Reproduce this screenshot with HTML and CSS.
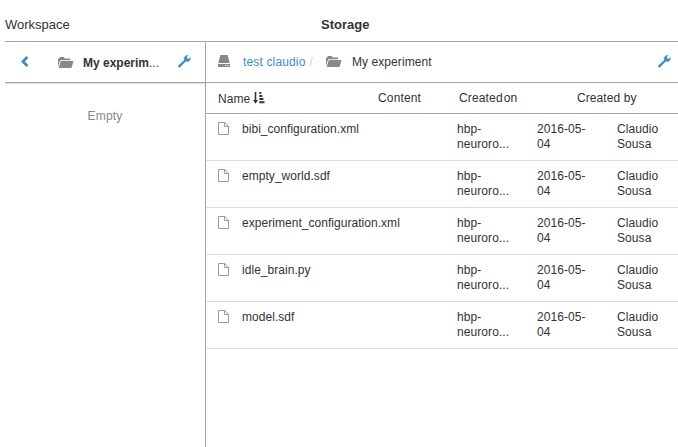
FILE: index.html
```html
<!DOCTYPE html>
<html lang="en">
<head>
<meta charset="utf-8">
<title>Storage</title>
<link rel="stylesheet" href="styles.css">
</head>
<body>
<svg class="defs" width="0" height="0">
  <symbol id="folder" viewBox="0 0 16 12"><path d="M0 10V2Q0 1.5.5 1.5H1.5V.5Q1.6 0 2.2 0H5.5Q6 0 6.2.6L6.5 1.5H11.5Q12.2 1.5 12.2 2.2V3.2H2.8Q2.2 3.2 1.9 4ZM3.3 4H15Q15.6 4 15.4 4.8L13.6 10.4Q13.4 11 12.7 11H1.2Q.7 11 .9 10.4L2.6 4.6Q2.8 4 3.3 4Z"/></symbol>
  <symbol id="wrench" viewBox="0 0 13 13"><path stroke="currentColor" stroke-width=".4" d="M10.3.2 8.8 1.6 9.1 3.7 10.8 4 12.3 2.6Q12.8 5.2 10.8 6.2 9.3 6.9 7.8 6.2L2.3 12Q1.4 12.7.7 12.1-.1 11.2.7 10.3L6.3 5.2Q5.6 2.4 7.4.9 8.7-.1 10.3.2Z"/></symbol>
  <symbol id="file" viewBox="0 0 11 13"><path fill="none" stroke="currentColor" d="M.5.5H6.8L10.5 4.2V12.5H.5ZM6.5.5V4.5H10.5"/></symbol>
</svg>
<header class="tabs"><span class="tab">Workspace</span><strong class="tab current">Storage</strong></header>
<main class="browser">
  <aside class="side">
    <div class="bar side-bar">
      <svg class="icon back" width="8" height="11" viewBox="0 0 8 11"><path fill="none" stroke="currentColor" stroke-width="2.8" d="M6.4 1.1 2 5.5 6.4 9.9"/></svg>
      <svg class="icon folder" width="16" height="12"><use href="#folder"/></svg>
      <span class="side-title"><strong>My experim</strong>...</span>
      <svg class="icon wrench" width="13" height="13"><use href="#wrench"/></svg>
    </div>
    <p class="empty">Empty</p>
  </aside>
  <section class="files">
    <nav class="bar">
      <svg class="icon disk" width="12" height="13" viewBox="0 0 12 13"><path fill-rule="evenodd" d="M2.2.7Q2.4 0 3 0H9Q9.6 0 9.8.7L11.7 8H.3ZM0 9H12V11.4Q12 12 11.4 12H.6Q0 12 0 11.4ZM7.2 10V11H8.3V10ZM9.3 10V11H10.4V10Z"/></svg>
      <a class="crumb">test claudio</a><span class="slash">/</span>
      <svg class="icon folder" width="16" height="12"><use href="#folder"/></svg>
      <span class="here">My experiment</span>
      <svg class="icon wrench" width="13" height="13"><use href="#wrench"/></svg>
    </nav>
    <div class="head">
      <span class="h-name">Name <svg class="sort" width="12" height="12" viewBox="0 0 12 12"><path d="M1.7 0H3.3V8H5L2.5 11.8 0 8H1.7ZM6.3 0H8.3V2H6.3ZM6.3 3H9.3V5H6.3ZM6.3 6H10.4V8H6.3ZM6.3 9.3H11.5V11.3H6.3Z"/></svg></span>
      <span class="h-content">Content</span><span class="h-on">Created on</span><span class="h-by">Created by</span>
    </div>
    <div class="row"><svg class="file" width="11" height="13"><use href="#file"/></svg><span class="name">bibi_configuration.xml</span><span>hbp-<br>neuroro...</span><span>2016-05-<br>04</span><span>Claudio<br>Sousa</span></div>
    <div class="row"><svg class="file" width="11" height="13"><use href="#file"/></svg><span class="name">empty_world.sdf</span><span>hbp-<br>neuroro...</span><span>2016-05-<br>04</span><span>Claudio<br>Sousa</span></div>
    <div class="row"><svg class="file" width="11" height="13"><use href="#file"/></svg><span class="name">experiment_configuration.xml</span><span>hbp-<br>neuroro...</span><span>2016-05-<br>04</span><span>Claudio<br>Sousa</span></div>
    <div class="row"><svg class="file" width="11" height="13"><use href="#file"/></svg><span class="name">idle_brain.py</span><span>hbp-<br>neuroro...</span><span>2016-05-<br>04</span><span>Claudio<br>Sousa</span></div>
    <div class="row"><svg class="file" width="11" height="13"><use href="#file"/></svg><span class="name">model.sdf</span><span>hbp-<br>neuroro...</span><span>2016-05-<br>04</span><span>Claudio<br>Sousa</span></div>
  </section>
</main>
</body>
</html>
```
FILE: styles.css
```css
* { box-sizing: border-box; }
body {
  margin: 0;
  height: 447px;
  padding-left: 5px;
  overflow: hidden;
  display: flex;
  flex-direction: column;
  background: #fff;
  color: #333;
  font: 12px/15px "Liberation Sans", Arial, sans-serif;
  letter-spacing: .08px;
}
svg { fill: currentColor; flex: none; display: block; }
.defs { position: absolute; }
.tabs {
  display: flex;
  flex: none;
  height: 42px;
  padding-top: 17px;
  border-bottom: 1px solid #a6a6a6;
  font-size: 13px;
  letter-spacing: 0;
}
.tab { width: 316px; }
.browser { display: flex; flex: 1; }
.side { width: 200px; }
.files { flex: 1; border-left: 1px solid #a6a6a6; }
.bar {
  display: flex;
  height: 41px;
  padding: 13px 7px 0 12px;
  border-bottom: 1px solid #a6a6a6;
}
.side-bar {
  padding: 14px 14px 0 16px;
  box-shadow: 0 1px #ddd;
}
.icon { color: #888; }
.back, .wrench { color: #428bca; }
.back { margin-right: 29px; }
.side-bar .folder { margin-top: 1px; }
.side-title { margin-left: 9px; letter-spacing: 0; white-space: nowrap; }
.wrench { margin-left: auto; }
.side-bar .wrench { margin-top: -1px; }
.empty { margin: 26px 0 0; text-align: center; color: #888; letter-spacing: .2px; }
.crumb { margin-left: 13px; color: #428bca; letter-spacing: .15px; }
.slash { margin-left: 4px; color: #ccc; }
.files .folder { margin: 1px 0 0 13px; }
.here { margin-left: 10px; }
.head {
  display: grid;
  grid-template-columns: 160px 81px 118px auto;
  height: 31px;
  padding: 8px 0 0 12px;
  border-bottom: 1px solid #a6a6a6;
  white-space: nowrap;
}
.h-name { display: flex; gap: 3px; padding-top: 1px; }
.h-content { letter-spacing: .15px; }
.h-on { letter-spacing: .15px; word-spacing: -2.5px; }
.row {
  display: grid;
  grid-template-columns: 24px 215px 80px 80px auto;
  height: 47px;
  padding: 8px 0 0 12px;
  border-bottom: 1px solid #ddd;
}
.file { color: #999; }
.name { letter-spacing: .04px; }
```
